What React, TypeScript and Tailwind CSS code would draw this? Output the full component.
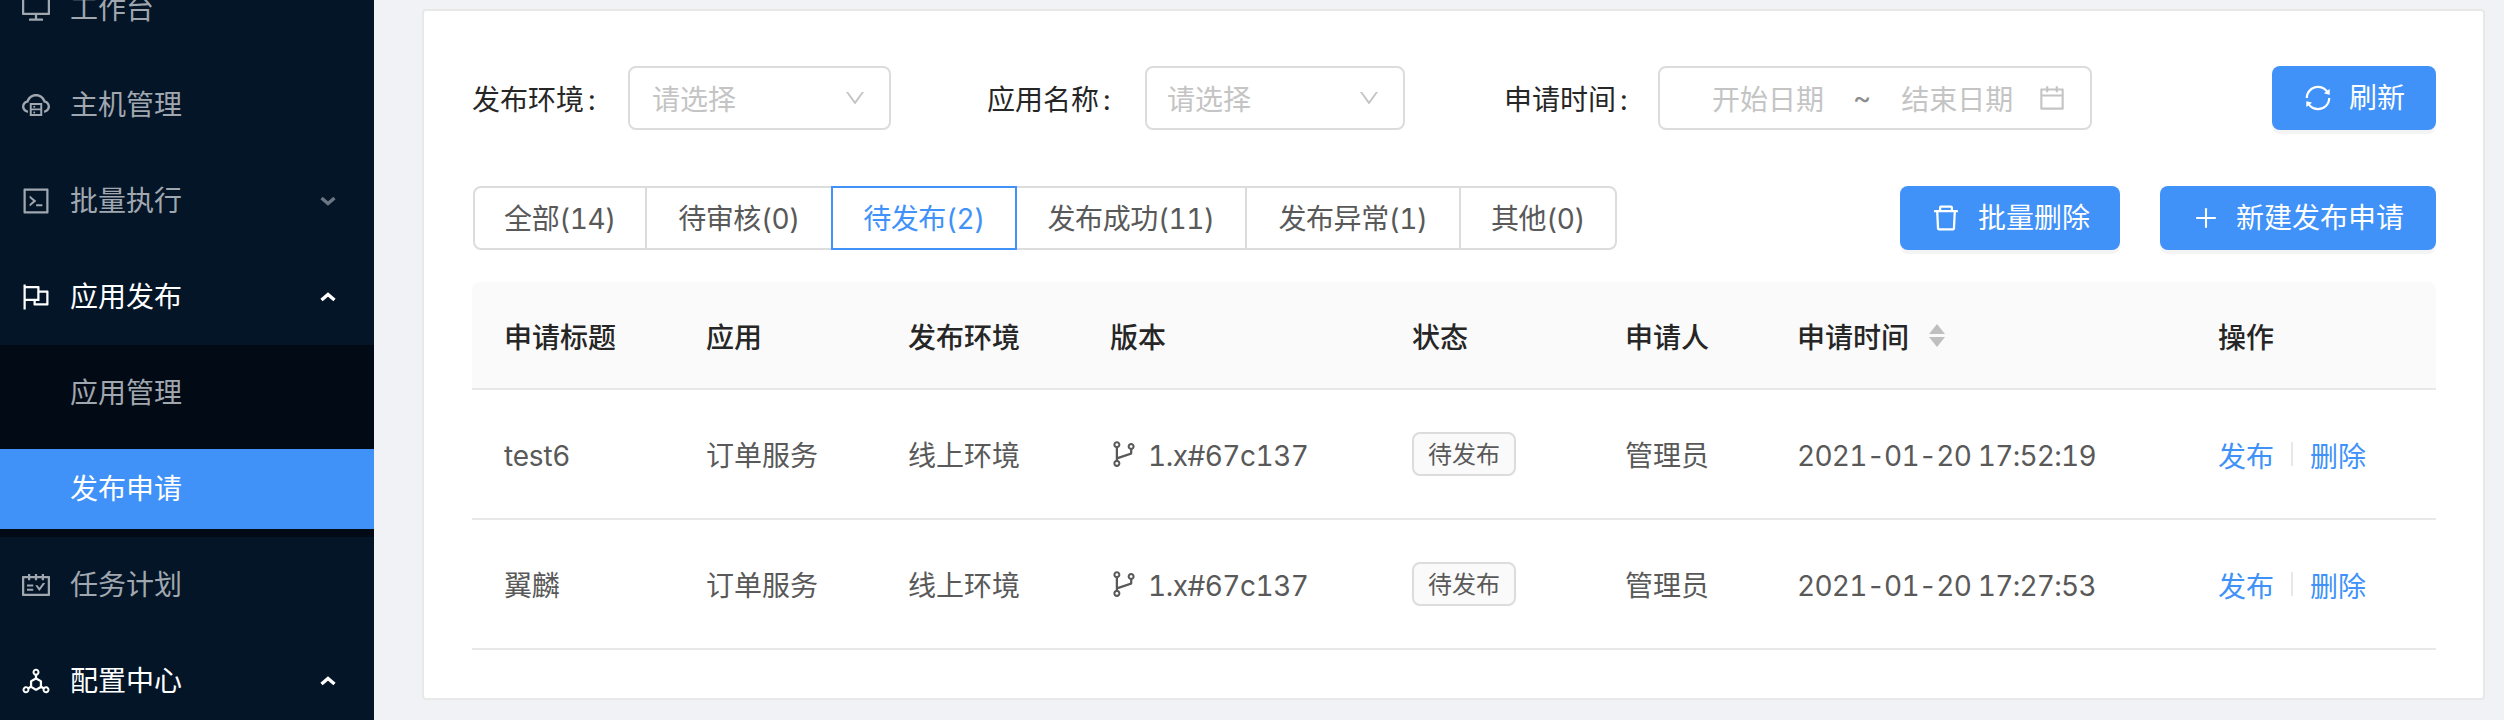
import type { ReactNode } from "react";
import {
  AiOutlineBranches,
  AiOutlineCalendar,
  AiOutlineCloudServer,
  AiOutlineCode,
  AiOutlineDelete,
  AiOutlineDeploymentUnit,
  AiOutlineDesktop,
  AiOutlineDown,
  AiOutlineFlag,
  AiOutlinePlus,
  AiOutlineSchedule,
  AiOutlineSync,
} from "react-icons/ai";

function Chevron({ up, active }: { up?: boolean; active?: boolean }) {
  return (
    <svg
      width="16"
      height="10"
      viewBox="0 0 16 10"
      fill="none"
      stroke={active ? "#ffffff" : "#6b7683"}
      strokeWidth="3.4"
      className="ml-auto mr-[38px]"
    >
      <polyline points={up ? "1.5,8 8,2.5 14.5,8" : "1.5,2 8,7.5 14.5,2"} />
    </svg>
  );
}

function MenuItem({
  icon,
  label,
  arrow,
  active,
  className = "",
}: {
  icon: ReactNode;
  label: string;
  arrow?: "up" | "down";
  active?: boolean;
  className?: string;
}) {
  return (
    <div
      className={`flex h-20 items-center pl-5 text-[28px] ${active ? "text-white" : "text-[#a0a7af]"} ${className}`}
    >
      <span className="mr-[18px] flex w-8 text-[32px]">{icon}</span>
      {label}
      {arrow && <Chevron up={arrow === "up"} active={active} />}
    </div>
  );
}

function Sidebar() {
  return (
    <aside className="h-full w-[374px] shrink-0 overflow-hidden bg-[#031527]">
      <div className="-mt-[31px] flex flex-col">
        <MenuItem icon={<AiOutlineDesktop />} label="工作台" className="mb-4" />
        <MenuItem icon={<AiOutlineCloudServer />} label="主机管理" className="mb-4" />
        <MenuItem icon={<AiOutlineCode />} label="批量执行" arrow="down" className="mb-4" />
        <MenuItem icon={<AiOutlineFlag />} label="应用发布" arrow="up" active className="mb-2" />
        <div className="flex flex-col bg-[#010a15] pb-2 pt-2">
          <div className="mb-4 flex h-20 items-center pl-[70px] text-[28px] text-[#a0a7af]">应用管理</div>
          <div className="flex h-20 items-center bg-[#4092f9] pl-[70px] text-[28px] text-white">发布申请</div>
        </div>
        <MenuItem icon={<AiOutlineSchedule />} label="任务计划" className="mb-4 mt-2" />
        <MenuItem icon={<AiOutlineDeploymentUnit />} label="配置中心" arrow="up" active />
      </div>
    </aside>
  );
}

function Select({ className }: { className: string }) {
  return (
    <div className={`flex h-16 items-center justify-between rounded-lg border-2 border-[#dcdcdc] pr-[22px] text-[28px] text-[#c4c4c4] ${className}`}>
      <span className="pt-[3px]">请选择</span>
      <AiOutlineDown className="text-2xl" />
    </div>
  );
}

function Label({ text, width }: { text: string; width: string }) {
  return (
    <div className={`pt-[3px] text-[28px] text-[#262626] ${width}`}>
      {text}
      <span className="ml-1">:</span>
    </div>
  );
}

function Button({ icon, label, width }: { icon: ReactNode; label: string; width: string }) {
  return (
    <button className={`flex h-16 items-center justify-center gap-4 rounded-lg bg-[#4092f9] text-[28px] text-white shadow-[0_4px_0_rgba(0,0,0,0.045)] ${width}`}>
      {icon}
      {label}
    </button>
  );
}

const tabs = [
  { label: "全部(14)", width: "w-[174px]" },
  { label: "待审核(0)", width: "w-[188px]" },
  { label: "待发布(2)", width: "w-[186px]", active: true },
  { label: "发布成功(11)", width: "w-[232px]" },
  { label: "发布异常(1)", width: "w-[216px]" },
  { label: "其他(0)", width: "w-[158px]" },
];

const rows = [
  { title: "test6", time: "2021-01-20 17:52:19" },
  { title: "翼麟", time: "2021-01-20 17:27:53" },
];

const gridCols = "grid grid-cols-[202px_202px_202px_302px_213px_172px_421px_250px]";
const headCell = "pl-8 pt-[6px]";
const cell = "pl-8 pt-1";

function Table() {
  return (
    <div className="mt-8 w-full">
      <div className={`${gridCols} h-[108px] items-center rounded-t-lg border-b-2 border-[#e8e8e8] bg-[#fafafa] text-[28px] font-medium text-[#262626]`}>
        <div className={headCell}>申请标题</div>
        <div className={headCell}>应用</div>
        <div className={headCell}>发布环境</div>
        <div className={headCell}>版本</div>
        <div className={headCell}>状态</div>
        <div className={headCell}>申请人</div>
        <div className="flex items-center pl-8">
          <span className="pt-[6px]">申请时间</span>
          <span className="ml-5 flex flex-col gap-[3px]">
            <span className="h-0 w-0 border-x-8 border-b-[10px] border-x-transparent border-b-[#bfbfbf]" />
            <span className="h-0 w-0 border-x-8 border-t-[10px] border-x-transparent border-t-[#bfbfbf]" />
          </span>
        </div>
        <div className={headCell}>操作</div>
      </div>
      {rows.map((row) => (
        <div key={row.title} className={`${gridCols} h-[130px] items-center border-b-2 border-[#e8e8e8] text-[28px] text-[#595959]`}>
          <div className={`${cell} tracking-[-0.2px]`}>{row.title}</div>
          <div className={cell}>订单服务</div>
          <div className={cell}>线上环境</div>
          <div className="flex items-center pl-[30px]">
            <AiOutlineBranches className="mr-[8px] text-[32px] text-[#595959]" />
            <span className="pt-1 tracking-[-0.5px]">1.x#67c137</span>
          </div>
          <div className="pl-8">
            <span className="inline-flex h-11 w-[104px] items-center justify-center rounded-lg border-2 border-[#dcdcdc] bg-[#fafafa] pt-[2px] text-2xl">待发布</span>
          </div>
          <div className={cell}>管理员</div>
          <div className={`${cell} tracking-[-0.75px]`}>{row.time}</div>
          <div className="flex items-center pl-8 text-[#4092f9]">
            <span className="pt-[6px]">发布</span>
            <span className="mx-[17px] h-6 w-[2px] bg-[#e8e8e8]" />
            <span className="pt-[6px]">删除</span>
          </div>
        </div>
      ))}
    </div>
  );
}

export default function App() {
  return (
    <div className="flex h-[720px] w-[2504px] overflow-hidden bg-[#f0f2f5] font-[Inter,'Noto_Sans_CJK_SC',sans-serif] tabular-nums">
      <Sidebar />
      <main className="flex-1 pl-12 pr-[19px] pt-[9px]">
        <div className="rounded border-2 border-[#e8e8e8] bg-white pb-12 pl-12 pr-[47px] pt-[55px]">
          <div className="flex items-center">
            <Label text="发布环境" width="w-[156px]" />
            <Select className="w-[263px] pl-[22px]" />
            <div className="w-[96px]" />
            <Label text="应用名称" width="w-[158px]" />
            <Select className="w-[260px] pl-5" />
            <div className="w-[99px]" />
            <Label text="申请时间" width="w-[154px]" />
            <div className="flex h-16 w-[434px] items-center rounded-lg border-2 border-[#dcdcdc] pl-[52px] pr-[23px] text-[28px] text-[#c4c4c4]">
              <span className="pt-[3px]">开始日期</span>
              <span className="ml-[29px] text-[#8c8c8c]">~</span>
              <span className="ml-[30px] pt-[3px]">结束日期</span>
              <AiOutlineCalendar className="ml-auto text-[30px]" />
            </div>
            <div className="ml-auto">
              <Button icon={<AiOutlineSync className="text-[30px]" />} label="刷新" width="w-[164px]" />
            </div>
          </div>
          <div className="mt-14 flex items-center">
            <div className="flex pl-px">
              {tabs.map((tab, i) => (
                <div
                  key={tab.label}
                  className={`flex h-[64px] items-center justify-center border-2 pt-[2px] text-[28px] tracking-[-0.4px] ${tab.width} ${i > 0 ? "-ml-[2px]" : ""} ${i === 0 ? "rounded-l-lg" : ""} ${i === tabs.length - 1 ? "rounded-r-lg" : ""} ${tab.active ? "z-10 border-[#4092f9] text-[#4092f9]" : "border-[#dcdcdc] text-[#595959]"}`}
                >
                  {tab.label}
                </div>
              ))}
            </div>
            <div className="ml-auto flex gap-10">
              <Button icon={<AiOutlineDelete className="text-[32px]" />} label="批量删除" width="w-[220px]" />
              <Button icon={<AiOutlinePlus className="text-[28px]" />} label="新建发布申请" width="w-[276px]" />
            </div>
          </div>
          <Table />
        </div>
      </main>
    </div>
  );
}
